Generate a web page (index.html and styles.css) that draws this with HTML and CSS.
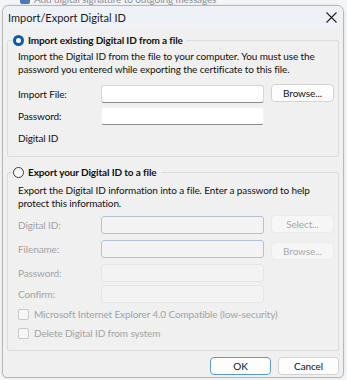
FILE: index.html
```html
<!DOCTYPE html>
<html lang="en">
<head>
    <meta charset="UTF-8">
    <title>Import/Export Digital ID</title>
    <link rel="stylesheet" href="styles.css">
</head>
<body>
    <div class="behind">
        <div class="behind-row">
            <span class="behind-check"></span>
            <span>Add digital signature to outgoing messages</span>
        </div>
    </div>

    <div class="window">
        <div class="titlebar">
            <span class="title">Import/Export Digital ID</span>
            <svg class="close" width="11" height="11" viewBox="0 0 11 11">
                <path d="M0.5 0.5 L10.5 10.5 M10.5 0.5 L0.5 10.5" stroke="#1f1f1f" stroke-width="1.1" fill="none"/>
            </svg>
        </div>

        <div class="content">
            <fieldset class="group">
                <legend><span class="radio checked"></span>Import existing Digital ID from a file</legend>
                <p class="desc">Import the Digital ID from the file to your computer. You must use the password you entered while exporting the certificate to this file.</p>
                <div class="rows">
                    <label>Import File:</label>
                    <div class="input"></div>
                    <button class="btn">Browse...</button>

                    <label>Password:</label>
                    <div class="input pw"></div>
                    <span></span>

                    <label>Digital ID</label>
                    <span></span>
                    <span></span>
                </div>
            </fieldset>

            <fieldset class="group export">
                <legend><span class="radio"></span>Export your Digital ID to a file</legend>
                <p class="desc">Export the Digital ID information into a file. Enter a password to help protect this information.</p>
                <div class="rows disabled">
                    <label>Digital ID:</label>
                    <div class="input framed"></div>
                    <button class="btn off">Select...</button>

                    <label>Filename:</label>
                    <div class="input framed"></div>
                    <button class="btn off low">Browse...</button>

                    <label>Password:</label>
                    <div class="input faint"></div>
                    <span></span>

                    <label class="tight">Confirm:</label>
                    <div class="input faint tight"></div>
                    <span></span>
                </div>
                <div class="checks">
                    <div class="check"><span class="box"></span>Microsoft Internet Explorer 4.0 Compatible (low-security)</div>
                    <div class="check"><span class="box"></span>Delete Digital ID from system</div>
                </div>
            </fieldset>

            <div class="actions">
                <button class="btn default">OK</button>
                <button class="btn">Cancel</button>
            </div>
        </div>
    </div>
</body>
</html>
```

FILE: styles.css
```css
* {
    margin: 0;
    padding: 0;
    box-sizing: border-box;
}

body {
    font-family: Lato, 'Noto Sans', sans-serif;
    font-size: 10px;
    letter-spacing: -0.12px;
    color: #111111;
    background: #f4f5f7;
    width: 347px;
    height: 380px;
    overflow: hidden;
}

.behind {
    height: 5px;
    overflow: hidden;
}

.behind-row {
    display: flex;
    align-items: center;
    gap: 4px;
    margin-top: -8px;
    padding-left: 20px;
    color: #8a8f96;
    line-height: 14px;
}

.behind-check {
    width: 10px;
    height: 10px;
    background: #4a78b8;
    border-radius: 2px;
}

.window {
    margin: 0 3px 0 2px;
    height: 373px;
    border: 1px solid #b8b8b8;
    border-radius: 7px 7px 5px 5px;
    background: #f0f0f0;
    overflow: hidden;
    box-shadow: 0 0 2px rgba(0, 0, 0, 0.15);
}

.titlebar {
    height: 22px;
    background: #eef2f7;
    display: flex;
    align-items: center;
    justify-content: space-between;
    padding: 0 6px 0 5px;
}

.title {
    font-size: 11px;
    letter-spacing: 0;
    color: #1a1a1a;
}

.close {
    margin-top: 1px;
}

.content {
    padding: 5px 4px 0 4px;
}

.group {
    border: 1px solid #dcdcdc;
    border-radius: 2px;
    padding: 0 8px 0 10px;
    min-width: 0;
}

.group legend {
    display: flex;
    align-items: center;
    gap: 4px;
    margin-left: -5px;
    padding: 0 4px 0 0;
    line-height: 14px;
    font-weight: 700;
    color: #111111;
}

.radio {
    width: 11px;
    height: 11px;
    border-radius: 50%;
    border: 1px solid #3a3a3a;
    background: #fafafa;
}

.radio.checked {
    border: 3px solid #0b5cad;
    background: #ffffff;
}

.desc {
    line-height: 13px;
    margin-top: 3px;
}

.rows {
    display: grid;
    grid-template-columns: 76px 163px 63px;
    column-gap: 7px;
    row-gap: 4px;
    align-items: center;
    margin-top: 9px;
    padding-bottom: 9px;
}

.rows label {
    line-height: 18px;
}

.input {
    height: 18px;
    background: #ffffff;
    border: 1px solid #d6d6d6;
    border-bottom-color: #8a8a8a;
    border-radius: 3px;
}

.input.pw {
    border-color: #f4f4f4;
    border-bottom-color: #8a8a8a;
}

.btn {
    font-family: inherit;
    font-size: 10px;
    letter-spacing: inherit;
    color: #111111;
    height: 18px;
    background: #fdfdfd;
    border: 1px solid #d3d3d3;
    border-radius: 4px;
    margin-top: -2px;
}

.export {
    margin-top: 8px;
}

.export .desc {
    margin-top: 5px;
}

.export .rows {
    margin-top: 6px;
    row-gap: 6px;
    padding-bottom: 0;
}

.export .rows .tight {
    margin-top: -3px;
}

.disabled label {
    color: #a3a3a3;
}

.input.framed {
    background: #f3f3f3;
    border: 1px solid #b4c3d4;
}

.input.faint {
    background: #f3f3f3;
    border: 1px solid #e6e6e6;
}

.btn.off {
    color: #a8a8a8;
    background: #f6f6f6;
    border-color: #ebebeb;
}

.btn.low {
    margin-top: 2px;
    margin-bottom: -2px;
}

.checks {
    display: flex;
    flex-direction: column;
    gap: 6px;
    margin-top: 5px;
    padding-bottom: 10px;
}

.check {
    display: flex;
    align-items: center;
    gap: 5px;
    color: #a3a3a3;
    line-height: 13px;
}

.box {
    width: 11px;
    height: 11px;
    border: 1px solid #c9c9c9;
    border-radius: 2px;
    background: #f7f7f7;
}

.actions {
    display: flex;
    justify-content: flex-end;
    gap: 7px;
    margin-top: 6px;
}

.actions .btn {
    width: 61px;
    margin-top: 0;
}

.btn.default {
    border-color: #5b9bd5;
}
```
